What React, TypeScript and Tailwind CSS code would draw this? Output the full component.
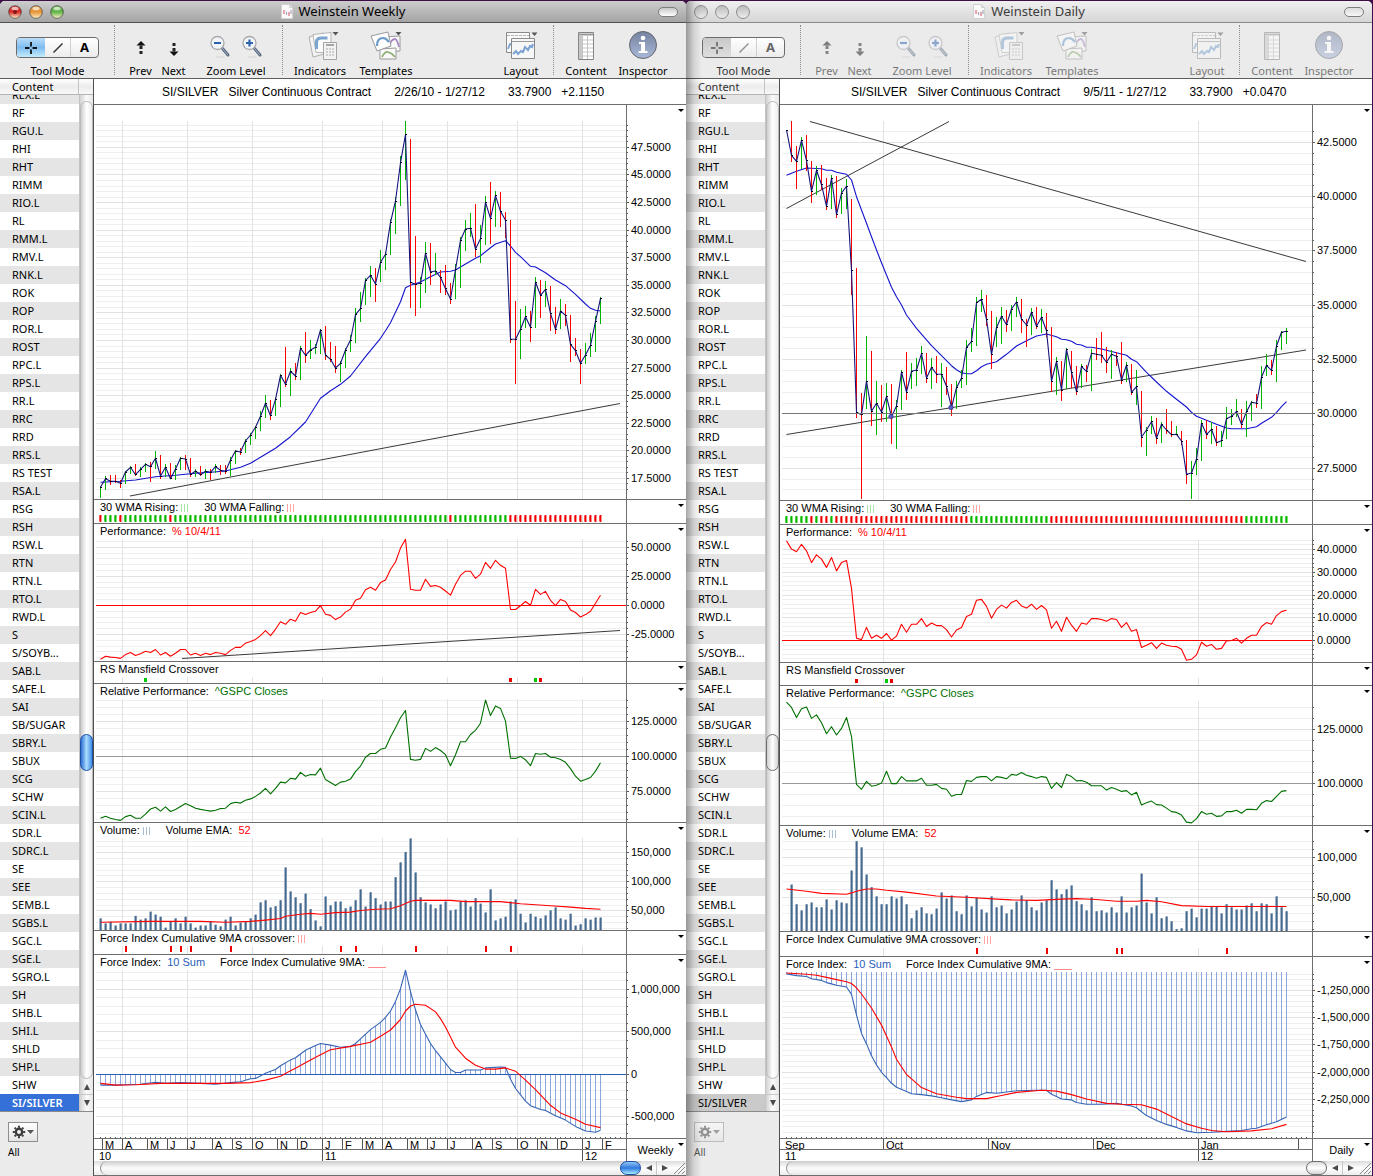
import React from "react";

type Axis = {
  base: number;
  baseY: number;
  perUnit: number;
  minor: number;
  min: number;
  max: number;
  labels: number[];
  decimals: number;
};
type Pt = [number, number];
type Line = { from: Pt; to: Pt };
type PanelSpec = {
  top: number;
  height: number;
  title: React.ReactNode;
  plotTop: number;
  axis?: Axis;
  content: React.ReactNode;
  dateTicks?: boolean;
};
type ChartSpec = {
  name: string;
  period: string;
  range: string;
  change: string;
  gap: string;
  panels: PanelSpec[];
  months: { at: number; label: string }[];
  years: { at: number; label: string }[];
  grid: number[];
  active: boolean;
};

const LEFT = 94;
const WIDTH = 532;
const barX = (i: number) => 100.5 + i * 5;
const snap = (y: number) => Math.floor(y) + 0.5;

const nums = (s: string) => s.trim().split(/\s+/).map(Number);
const pairs = (s: string): Pt[] =>
  s.trim().split(/\s+/).map((p) => p.split(":").map(Number) as Pt);
const dense = (s: string): Pt[] => nums(s).map((v, i) => [i, v] as Pt);

const path = (pts: Pt[], toY: (v: number) => number) =>
  pts.map(([i, v]) => `${barX(i)},${toY(v).toFixed(1)}`).join(" ");

function sample(pts: Pt[], i: number) {
  for (let k = 1; k < pts.length; k++) {
    const [a, va] = pts[k - 1];
    const [b, vb] = pts[k];
    if (i <= b) return va + ((vb - va) * (i - a)) / (b - a);
  }
  return pts[pts.length - 1][1];
}

/* Series rows are recorded on a finer grid than the screen. */
const priceRow = (v: number) => 100 + v / 3;
const weeklyRow = (v: number) => 490 + v / 2.376;
const dailyRow = (v: number) => 490 + v / 2.2857;

const SYMBOLS =
  "REX.L,RF,RGU.L,RHI,RHT,RIMM,RIO.L,RL,RMM.L,RMV.L,RNK.L,ROK,ROP,ROR.L,ROST,RPC.L,RPS.L,RR.L,RRC,RRD,RRS.L,RS TEST,RSA.L,RSG,RSH,RSW.L,RTN,RTN.L,RTO.L,RWD.L,S,S/SOYB...,SAB.L,SAFE.L,SAI,SB/SUGAR,SBRY.L,SBUX,SCG,SCHW,SCIN.L,SDR.L,SDRC.L,SE,SEE,SEMB.L,SGBS.L,SGC.L,SGE.L,SGRO.L,SH,SHB.L,SHI.L,SHLD,SHP.L,SHW,SI/SILVER".split(
    ","
  );

/* close,high,low,direction */
const WEEKLY_PRICE = `1161,1158,1193,g 1136,1128,1169,g 1144,1125,1155,r 1144,1125,1150,r 1150,1140,1163,r
1116,1114,1151,g 1102,1098,1121,g 1124,1091,1128,r 1108,1102,1130,g 1093,1088,1116,g 1100,1086,1145,r
1075,1053,1108,g 1128,1066,1136,r 1102,1092,1130,g 1136,1090,1138,r 1107,1096,1141,g 1075,1072,1110,g
1077,1066,1109,r 1124,1075,1131,r 1113,1107,1130,g 1124,1098,1127,r 1114,1108,1136,g 1117,1106,1140,r
1100,1093,1118,g 1111,1096,1125,r 1114,1096,1121,r 1080,1072,1128,g 1053,1050,1091,g 1056,1044,1066,r
1023,1018,1059,g 1005,1000,1035,g 982,978,1017,g 949,934,992,g 910,885,954,g 947,900,960,r 898,892,948,g
826,822,921,g 853,742,861,r 814,804,888,g 828,790,839,r 745,738,840,g 766,697,788,r 750,720,777,g
742,732,762,g 690,686,762,g 765,678,780,r 778,726,786,r 804,738,819,r 790,784,846,g 750,745,804,g
720,706,755,g 644,625,729,g 626,576,666,g 541,534,615,g 526,498,591,g 552,504,605,r 487,450,545,g
463,455,510,g 367,357,465,g 303,290,402,g 188,168,318,g 104,64,240,g 547,118,624,r 553,408,648,r
550,530,624,g 460,426,579,g 516,430,555,r 513,459,524,g 532,510,579,r 566,496,585,r 597,549,612,r
508,492,597,g 421,411,564,g 387,360,453,g 385,340,412,g 447,313,471,r 416,375,489,g 307,289,435,g
355,246,432,r 287,273,381,g 334,277,381,r 361,336,415,r 718,360,729,r 718,603,852,r 688,627,777,g
650,618,684,g 682,633,726,r 547,532,684,g 586,541,654,r 568,543,621,g 640,559,693,r 688,621,702,r
633,597,687,g 646,612,678,r 733,645,786,r 752,714,768,r 790,747,852,r 765,729,792,g 736,699,771,g
664,648,756,g 595,591,672,g`;

const DAILY_PRICE = `90,90,90,g 166,64,186,r 184,138,267,r 121,111,208,g 182,105,213,r 274,183,309,r 211,198,285,g
254,195,270,r 319,234,330,r 234,225,327,g 344,229,354,r 279,264,342,g 259,237,327,g 512,297,585,r
937,504,954,r 944,879,1197,r 843,708,927,g 934,753,978,r 910,843,1005,g 936,855,966,r 890,849,966,g
950,852,1032,r 918,900,1047,g 816,811,930,g 876,756,900,r 814,789,867,g 810,774,858,g 761,738,822,g
834,759,849,r 802,774,867,g 822,768,849,r 823,789,921,g 859,801,885,r 922,852,948,r 863,843,927,g
834,810,864,g 742,720,855,g 724,684,756,g 608,591,738,g 598,570,636,g 658,585,678,r 763,633,807,r
683,651,741,g 649,621,732,g 674,630,696,r 627,615,693,g 606,591,651,g 657,597,699,r 675,657,741,r
637,624,705,g 679,621,687,r 652,627,699,g 692,639,711,r 843,681,876,r 784,771,885,g 870,783,903,r
748,744,868,g 817,753,865,r 875,798,885,r 800,792,865,g 814,795,846,r 760,747,873,g 763,714,780,r
766,696,789,r 787,741,819,r 763,750,837,g 769,756,798,r 840,726,852,r 795,786,846,g 877,792,885,r
860,810,915,g 1011,873,1041,r 990,981,1068,g 965,948,1002,g 1015,954,1032,r 973,966,1029,g 990,927,1002,r
1004,963,1011,r 1003,978,1005,g 1023,993,1035,r 1123,1020,1152,r 1119,1083,1197,g 1077,1044,1125,g
970,960,1083,g 1003,960,1017,r 988,966,1032,g 1028,978,1038,r 1022,993,1041,g 956,921,1017,g 949,927,975,g
935,897,951,g 973,927,984,r 935,903,1011,g 907,903,963,g 910,882,924,r 832,798,927,g 796,762,828,g
811,780,825,r 738,720,846,g 697,694,750,g 694,684,732,g`;

const WEEKLY_WMA = pairs(
  "0:1147 4:1144 7:1140 11:1130 15:1126 19:1120 22:1117 25:1113 28:1102 30:1090 32:1072 35:1045 38:1010 41:966 44:895 46:872 48:853 50:828 53:770 56:715 57:692 58:668 59:637 60:605 61:563 62:556 64:546 66:530 68:516 70:514 71:510 73:492 75:475 76:467 78:443 79:432 81:422 82:438 83:457 84:470 86:499 87:501 89:518 91:540 93:557 95:583 97:612 98:625 99:631 100:633"
);
const DAILY_WMA = pairs(
  "0:226 2:214 4:204 7:206 8:211 9:211 10:217 12:223 13:240 14:290 15:330 16:370 17:410 18:450 19:488 20:525 21:562 22:590 23:615 24:645 26:685 29:737 31:767 33:797 34:809 35:818 36:821 37:821 38:812 39:800 40:793 42:785 44:763 46:738 48:722 50:708 52:702 54:710 55:718 56:719 57:724 58:733 59:735 60:742 61:742 63:747 66:758 68:766 69:778 70:785 72:817 74:846 76:874 78:898 80:921 81:937 82:949 84:961 86:973 88:984 89:986 92:986 94:980 95:970 97:952 98:937 99:920 100:905"
);

const WEEKLY_PERF = dense(
  "402 395 397 398 400 391 386 393 389 383 386 379 392 386 395 388 379 379 392 388 393 388 391 386 388 391 381 374 374 364 360 355 346 334 346 331 313 319 307 312 291 296 291 288 275 295 298 308 302 290 283 262 257 237 231 238 220 214 189 171 138 117 236 238 238 212 229 227 231 240 250 224 203 193 193 210 200 172 186 167 179 186 284 284 275 265 274 236 248 241 262 275 260 265 285 291 302 296 288 269 250"
);
const DAILY_PERF = dense(
  "116 135 141 124 139 166 148 158 177 154 185 166 161 225 339 342 314 339 332 339 328 343 334 307 325 307 307 294 312 304 310 310 319 336 320 314 289 284 252 250 266 293 273 263 270 257 252 265 270 261 273 264 274 316 300 323 291 309 323 304 307 294 294 296 300 294 296 314 303 323 319 360 355 349 362 350 355 357 358 364 389 387 377 348 357 353 364 362 345 344 339 350 339 332 332 312 303 307 287 278 275"
);
const WEEKLY_REL = dense(
  "780 775 780 783 785 776 773 780 780 770 758 754 763 753 764 759 752 745 750 756 759 761 763 761 757 756 745 742 744 737 734 728 720 709 722 709 694 696 685 687 671 680 676 677 661 688 695 702 694 692 687 669 656 635 626 626 616 613 587 565 541 524 640 642 640 614 621 612 619 629 655 629 598 598 581 571 554 499 536 513 519 549 637 638 633 641 655 626 628 626 635 636 640 647 662 680 692 688 683 668 648"
);
const DAILY_REL = dense(
  "485 497 520 500 496 522 514 532 557 541 560 545 520 563 673 684 666 677 675 670 643 671 671 655 665 665 665 659 675 675 673 682 684 700 696 696 664 666 657 655 655 665 655 657 660 650 652 646 652 655 659 655 657 682 669 680 650 655 665 664 668 676 676 676 686 680 684 689 687 697 691 720 715 711 719 720 727 735 737 743 759 761 751 735 741 739 746 745 735 735 732 739 730 730 731 716 710 712 700 689 687"
);
const WEEKLY_VOL = nums(
  "1018 1030 1026 1035 1030 1030 1030 1012 1021 1018 1002 1009 1014 1040 1025 1018 1030 1014 1030 1040 1035 1035 1025 1033 1037 1021 1014 1035 1028 1026 1018 1009 980 975 992 989 975 897 954 968 982 959 996 1023 1037 966 987 978 978 994 990 975 949 990 956 970 985 978 978 920 885 860 828 909 968 980 985 994 985 978 999 997 978 975 990 970 983 1004 949 1023 1018 1014 978 973 1007 1028 1007 1014 1018 1011 999 992 1018 1021 1007 1035 1032 1018 1021 1016 1016"
);
const DAILY_VOL = nums(
  "1008 902 947 961 947 943 954 954 936 959 938 943 945 870 803 817 879 908 929 947 947 929 934 929 947 979 961 954 968 970 957 920 934 927 963 970 927 952 932 959 966 929 954 950 968 959 941 927 938 954 961 943 938 892 913 924 913 904 940 947 961 931 963 961 966 954 966 929 966 954 950 877 943 968 931 979 975 986 1004 1002 963 957 977 957 957 952 952 968 947 954 959 959 950 945 963 945 947 968 929 954 963"
);
const WEEKLY_EMA = pairs(
  "0:1027 10:1025 20:1025 25:1027 30:1025 33:1022 36:1018 37:1013 40:1008 42:1006 44:1008 47:1004 50:1003 52:999 55:996 58:995 60:988 62:977 63:975 70:975 73:978 80:978 84:983 90:988 94:991 97:994 100:996"
);
const DAILY_EMA = pairs(
  "0:912 4:917 7:922 12:924 13:921 14:917 16:912 18:912 20:915 24:919 30:928 36:931 42:935 45:937 50:938 55:935 58:934 62:936 66:940 70:940 72:938 75:941 79:950 84:952 92:952 100:952"
);
const WEEKLY_FORCE = pairs(
  "0:1414 3:1414 5:1413 8:1412 11:1407 13:1410 16:1408 20:1410 23:1412 26:1408 28:1406 30:1399 31:1398 33:1386 34:1381 35:1377 36:1368 38:1354 39:1349 41:1331 43:1320 44:1315 46:1319 48:1324 50:1322 51:1315 52:1304 54:1282 56:1265 57:1253 58:1238 59:1215 60:1185 61:1141 62:1192 63:1235 64:1270 65:1293 66:1315 67:1332 69:1362 70:1377 71:1384 72:1384 73:1378 76:1378 77:1373 80:1371 81:1372 82:1400 83:1422 85:1452 86:1463 88:1472 89:1474 91:1487 93:1497 95:1512 97:1523 99:1526 100:1521"
);
const WEEKLY_SIGNAL = pairs(
  "0:1410 3:1414 7:1413 12:1410 25:1410 30:1408 33:1402 36:1393 38:1380 39:1374 42:1354 44:1342 46:1330 50:1322 54:1312 56:1298 58:1283 60:1258 61:1238 62:1226 63:1222 65:1224 67:1240 68:1256 69:1276 70:1300 71:1324 73:1350 75:1367 77:1376 79:1376 81:1373 83:1381 85:1402 87:1425 90:1462 92:1480 95:1495 97:1507 100:1515"
);
const DAILY_FORCE = pairs(
  "0:1106 2:1110 4:1112 5:1117 7:1121 8:1126 9:1129 10:1132 12:1136 13:1153 14:1200 15:1242 16:1266 17:1293 18:1314 19:1331 20:1343 21:1356 22:1365 24:1375 25:1380 27:1382 29:1385 31:1389 33:1394 35:1398 37:1394 38:1386 40:1377 42:1379 46:1373 50:1372 52:1372 53:1381 54:1386 55:1392 57:1394 58:1400 60:1404 63:1404 66:1402 69:1408 70:1412 71:1421 72:1430 74:1441 76:1450 78:1457 80:1465 82:1469 85:1468 88:1466 91:1464 93:1460 94:1459 96:1451 98:1444 100:1433"
);
const DAILY_SIGNAL = pairs(
  "0:1104 4:1107 6:1109 8:1114 10:1119 12:1124 13:1128 14:1138 15:1152 17:1184 19:1223 21:1273 22:1301 24:1336 25:1346 27:1366 30:1380 34:1388 36:1391 40:1391 43:1384 46:1377 51:1372 54:1374 57:1382 60:1392 64:1402 67:1404 71:1405 74:1415 77:1432 80:1449 83:1459 85:1464 88:1467 93:1465 97:1460 100:1450"
);

const GREEN = "#00b400";
const RED = "#ff0000";

function Curve({ pts, toY, color }: { pts: Pt[]; toY: (v: number) => number; color: string }) {
  return <polyline points={path(pts, toY)} fill="none" stroke={color} strokeWidth={1.1} strokeLinejoin="round" />;
}

function Rule({ y, color }: { y: number; color: string }) {
  return <path d={`M96 ${snap(y)}H626`} stroke={color} shapeRendering="crispEdges" />;
}

function Trend({ from, to }: Line) {
  return <path d={`M${from[0]} ${from[1]}L${to[0]} ${to[1]}`} stroke="#3a3a3a" strokeWidth={1} />;
}

function PriceSeries({ data, wma, trends }: { data: string; wma: Pt[]; trends: Line[] }) {
  const bars = data.split(/\s+/).map((b) => {
    const [c, h, l, d] = b.split(",");
    return { c: +c, h: +h, l: +l, up: d === "g" };
  });
  return (
    <>
      {trends.map((t, i) => (
        <Trend key={i} {...t} />
      ))}
      <Curve pts={wma} toY={priceRow} color="#1414cc" />
      {bars.map((b, i) => (
        <path
          key={i}
          d={`M${barX(i)} ${priceRow(b.h)}V${priceRow(b.l)}`}
          stroke={b.up ? GREEN : RED}
          shapeRendering="crispEdges"
        />
      ))}
      <polyline
        points={path(bars.map((b, i) => [i, b.c] as Pt), priceRow)}
        fill="none"
        stroke="#14147a"
        strokeWidth={1.1}
        strokeLinejoin="round"
      />
      {bars.map((b, i) => (
        <path key={i} d={`M${barX(i) - 0.5} ${snap(priceRow(b.c))}h2`} stroke="#000022" shapeRendering="crispEdges" />
      ))}
    </>
  );
}

function Strip({ y, isRed }: { y: number; isRed: (i: number) => boolean }) {
  return (
    <g>
      {Array.from({ length: 101 }, (_, i) => (
        <g key={i}>
          <rect x={barX(i) - 1.5} y={y} width={3} height={7} fill={isRed(i) ? "#ff9090" : "#84e070"} />
          <rect x={barX(i) - 0.5} y={y} width={1} height={7} fill={isRed(i) ? "#f00000" : "#00b800"} />
          <rect x={barX(i) - 1.5} y={y + 1} width={1} height={5} fill={isRed(i) ? "#ff4a4a" : "#4ccc3c"} />
        </g>
      ))}
    </g>
  );
}

function Marks({ at, y, h, color }: { at: number[]; y: number; h: number; color: string }) {
  return (
    <g shapeRendering="crispEdges">
      {at.map((i) => (
        <rect key={i} x={barX(i) - (h > 5 ? 0.5 : 1.5)} y={y} width={h > 5 ? 2 : 3} height={h} fill={color} />
      ))}
    </g>
  );
}

function Volume({ tops, toY, base }: { tops: number[]; toY: (v: number) => number; base: number }) {
  return (
    <g>
      {tops.map((t, i) => (
        <g key={i}>
          <rect x={barX(i) - 1.5} y={toY(t)} width={3} height={Math.max(0, base - toY(t))} fill="#a3b4c6" />
          <rect x={barX(i) - 0.5} y={toY(t)} width={1} height={Math.max(0, base - toY(t))} fill="#456a90" />
          <rect x={barX(i) + 0.5} y={toY(t)} width={1} height={Math.max(0, base - toY(t))} fill="#7b95b0" />
        </g>
      ))}
    </g>
  );
}

function Hatch({ pts, toY, from }: { pts: Pt[]; toY: (v: number) => number; from: number }) {
  return (
    <g shapeRendering="crispEdges">
      {Array.from({ length: 101 }, (_, i) => (
        <path key={i} d={`M${barX(i)} ${from}V${toY(sample(pts, i))}`} stroke="#8aa6dc" />
      ))}
    </g>
  );
}

function Key({ kind }: { kind: "green" | "red" | "blue" }) {
  const tone =
    kind === "green" ? "border-[#a5e3a5]" : kind === "red" ? "border-[#ffa5a5]" : "border-[#aabdd2]";
  return (
    <span className="ml-[3px] flex h-2 gap-[2px]">
      <i className={`border-l ${tone}`} />
      <i className={`border-l ${tone}`} />
      <i className={`border-l ${tone}`} />
    </span>
  );
}

const wmaTitle = (
  <>
    <span>30 WMA Rising:</span>
    <Key kind="green" />
    <span className="ml-4">30 WMA Falling:</span>
    <Key kind="red" />
  </>
);
const perfTitle = (
  <>
    <span>Performance:</span>
    <span className="ml-1.5 text-[#ff0000]">% 10/4/11</span>
  </>
);
const relTitle = (
  <>
    <span>Relative Performance:</span>
    <span className="ml-1.5 text-[#007000]">^GSPC Closes</span>
  </>
);
const volTitle = (
  <>
    <span>Volume:</span>
    <Key kind="blue" />
    <span className="ml-4">Volume EMA:</span>
    <span className="ml-1.5 text-[#ff0000]">52</span>
  </>
);
const crossTitle = (
  <>
    <span>Force Index Cumulative 9MA crossover:</span>
    <Key kind="red" />
  </>
);
const forceTitle = (
  <>
    <span>Force Index:</span>
    <span className="ml-1.5 text-[#2a5db8]">10 Sum</span>
    <span className="ml-[15px]">Force Index Cumulative 9MA:</span>
    <span className="ml-[3px] h-[11px] w-[18px] border-b border-[#ff8a8a]" />
  </>
);

const series = (from: number, to: number, step: number) =>
  Array.from({ length: Math.round((to - from) / step) + 1 }, (_, i) => from + i * step);

const weeklyRed = (i: number) => i === 0 || i === 4 || i === 14 || i === 70 || i >= 82;
const dailyRed = (i: number) =>
  i === 5 || i === 7 || i === 8 || (i >= 10 && i <= 36) || (i >= 53 && i <= 91);

const WEEKLY: ChartSpec = {
  name: "Weinstein Weekly",
  period: "Weekly",
  range: "2/26/10 - 1/27/12",
  change: "+2.1150",
  gap: "ml-[68px]",
  active: true,
  grid: [122, 187, 252, 322, 382, 447, 517, 582],
  months: [102, 122, 147, 167, 187, 212, 232, 252, 277, 297, 322, 342, 362, 382, 407, 427, 447, 472, 492, 517, 537, 557, 582, 602].map(
    (at, i) => ({ at, label: "MAMJJASONDJFMAMJJASONDJF"[i] })
  ),
  years: [
    { at: 94, label: "10" },
    { at: 322, label: "11" },
    { at: 582, label: "12" },
  ],
  panels: [
    {
      top: 105,
      height: 395,
      title: null,
      plotTop: 121,
      axis: { base: 47.5, baseY: 147.4, perUnit: 11.035, minor: 0.5, min: 16.5, max: 49.5, labels: series(17.5, 47.5, 2.5), decimals: 4 },
      content: (
        <PriceSeries data={WEEKLY_PRICE} wma={WEEKLY_WMA} trends={[{ from: [130, 496], to: [620, 403.5] }]} />
      ),
    },
    { top: 500, height: 24, title: wmaTitle, plotTop: 515, content: <Strip y={515} isRed={weeklyRed} /> },
    {
      top: 524,
      height: 138,
      title: perfTitle,
      plotTop: 539,
      axis: { base: 0, baseY: 605.4, perUnit: 1.163, minor: 5, min: -45, max: 55, labels: [50, 25, 0, -25], decimals: 4 },
      content: (
        <>
          <Rule y={605} color="#ff0000" />
          <Trend from={[182, 658.5]} to={[620, 630.5]} />
          <Curve pts={WEEKLY_PERF} toY={weeklyRow} color="#ff0000" />
        </>
      ),
    },
    {
      top: 662,
      height: 22,
      title: <span>RS Mansfield Crossover</span>,
      plotTop: 677,
      content: (
        <>
          <Marks at={[9, 87]} y={678} h={4} color="#00c800" />
          <Marks at={[82, 88]} y={678} h={4} color="#e60000" />
        </>
      ),
    },
    {
      top: 684,
      height: 139,
      title: relTitle,
      plotTop: 699,
      axis: { base: 100, baseY: 756.4, perUnit: 1.405, minor: 5, min: 55, max: 140, labels: [125, 100, 75], decimals: 4 },
      content: (
        <>
          <Rule y={756} color="#999999" />
          <Curve pts={WEEKLY_REL} toY={weeklyRow} color="#007000" />
        </>
      ),
    },
    {
      top: 823,
      height: 108,
      title: volTitle,
      plotTop: 838,
      axis: { base: 100000, baseY: 881.8, perUnit: 0.000581, minor: 10000, min: 20000, max: 170000, labels: [150000, 100000, 50000], decimals: 0 },
      content: (
        <>
          <Volume tops={WEEKLY_VOL} toY={weeklyRow} base={930} />
          <Curve pts={WEEKLY_EMA} toY={weeklyRow} color="#ff0000" />
        </>
      ),
    },
    {
      top: 931,
      height: 24,
      title: crossTitle,
      plotTop: 946,
      content: <Marks at={[5, 14, 16, 18, 26, 48, 51, 63, 77, 82]} y={946} h={6} color="#f00000" />,
    },
    {
      top: 955,
      height: 184,
      title: forceTitle,
      plotTop: 970,
      dateTicks: true,
      axis: { base: 0, baseY: 1074, perUnit: 0.0000846, minor: 100000, min: -700000, max: 1200000, labels: [1000000, 500000, 0, -500000], decimals: 0 },
      content: (
        <>
          <Hatch pts={WEEKLY_FORCE} toY={weeklyRow} from={1074} />
          <Rule y={1074} color="#2a5db8" />
          <Curve pts={WEEKLY_FORCE} toY={weeklyRow} color="#3564b4" />
          <Curve pts={WEEKLY_SIGNAL} toY={weeklyRow} color="#ff0000" />
        </>
      ),
    },
  ],
};

const DAILY: ChartSpec = {
  name: "Weinstein Daily",
  period: "Daily",
  range: "9/5/11 - 1/27/12",
  change: "+0.0470",
  gap: "ml-[71px]",
  active: false,
  grid: [197, 512],
  months: [
    { at: 94, label: "Sep" },
    { at: 197, label: "Oct" },
    { at: 302, label: "Nov" },
    { at: 407, label: "Dec" },
    { at: 512, label: "Jan" },
    { at: 612, label: "" },
  ],
  years: [
    { at: 94, label: "11" },
    { at: 512, label: "12" },
  ],
  panels: [
    {
      top: 105,
      height: 396,
      title: null,
      plotTop: 121,
      axis: { base: 42.5, baseY: 142.3, perUnit: 21.73, minor: 0.5, min: 26.5, max: 43, labels: series(27.5, 42.5, 2.5), decimals: 4 },
      content: (
        <>
          <PriceSeries
            data={DAILY_PRICE}
            wma={DAILY_WMA}
            trends={[
              { from: [124, 121.5], to: [620, 261.5] },
              { from: [100.5, 208.5], to: [263, 121.5] },
              { from: [100.5, 434.5], to: [620, 350] },
            ]}
          />
          <Rule y={413} color="#777777" />
          <circle cx={205} cy={416.5} r={2.3} fill="#5a5ac0" stroke="#2b2b86" strokeWidth={0.6} />
          <circle cx={265} cy={407.5} r={2.3} fill="#5a5ac0" stroke="#2b2b86" strokeWidth={0.6} />
        </>
      ),
    },
    { top: 501, height: 24, title: wmaTitle, plotTop: 516, content: <Strip y={516} isRed={dailyRed} /> },
    {
      top: 525,
      height: 138,
      title: perfTitle,
      plotTop: 540,
      axis: { base: 0, baseY: 640.5, perUnit: 2.275, minor: 2, min: -8, max: 44, labels: [40, 30, 20, 10, 0], decimals: 4 },
      content: (
        <>
          <Rule y={640} color="#ff0000" />
          <Curve pts={DAILY_PERF} toY={dailyRow} color="#ff0000" />
        </>
      ),
    },
    {
      top: 663,
      height: 23,
      title: <span>RS Mansfield Crossover</span>,
      plotTop: 678,
      content: (
        <>
          <Marks at={[20]} y={679} h={4} color="#00c800" />
          <Marks at={[14, 21]} y={679} h={4} color="#e60000" />
        </>
      ),
    },
    {
      top: 686,
      height: 140,
      title: relTitle,
      plotTop: 701,
      axis: { base: 100, baseY: 783.5, perUnit: 2.172, minor: 5, min: 85, max: 135, labels: [125, 100], decimals: 4 },
      content: (
        <>
          <Rule y={783} color="#999999" />
          <Curve pts={DAILY_REL} toY={dailyRow} color="#007000" />
        </>
      ),
    },
    {
      top: 826,
      height: 106,
      title: volTitle,
      plotTop: 841,
      axis: { base: 50000, baseY: 897.3, perUnit: 0.000797, minor: 10000, min: 10000, max: 120000, labels: [100000, 50000], decimals: 0 },
      content: (
        <>
          <Volume tops={DAILY_VOL} toY={dailyRow} base={931} />
          <Curve pts={DAILY_EMA} toY={dailyRow} color="#ff0000" />
        </>
      ),
    },
    {
      top: 932,
      height: 25,
      title: crossTitle,
      plotTop: 948,
      content: <Marks at={[38, 52, 66, 67, 88]} y={948} h={6} color="#f00000" />,
    },
    {
      top: 957,
      height: 182,
      title: forceTitle,
      plotTop: 972,
      dateTicks: true,
      axis: {
        base: -1250000,
        baseY: 990.5,
        perUnit: 0.0001089,
        minor: 50000,
        min: -2550000,
        max: -1100000,
        labels: [-1250000, -1500000, -1750000, -2000000, -2250000],
        decimals: 0,
      },
      content: (
        <>
          <Hatch pts={DAILY_FORCE} toY={dailyRow} from={972} />
          <Curve pts={DAILY_FORCE} toY={dailyRow} color="#3564b4" />
          <Curve pts={DAILY_SIGNAL} toY={dailyRow} color="#ff0000" />
        </>
      ),
    },
  ],
};

function Panel({ spec, grid }: { spec: PanelSpec; grid: number[] }) {
  const { top, height, axis, plotTop } = spec;
  const bottom = top + height - 1;
  const yOf = (v: number) => (axis ? axis.baseY - (v - axis.base) * axis.perUnit : 0);
  const minors = axis ? series(axis.min, axis.max, axis.minor) : [];
  const isMajor = (v: number) => !!axis && axis.labels.some((l) => Math.abs(l - v) < 1e-6);
  return (
    <section className="flex border-b border-[#6e6e6e]" style={{ height }}>
      <div className="relative min-w-0 flex-1">
        <svg
          className="block h-full w-full"
          viewBox={`${LEFT} ${top} ${WIDTH} ${height - 1}`}
          preserveAspectRatio="none"
          aria-hidden="true"
        >
          <g shapeRendering="crispEdges">
            {minors.map((v) => (
              <path key={v} d={`M96 ${snap(yOf(v))}H626`} stroke={isMajor(v) ? "#e2e2e2" : "#efefef"} />
            ))}
            {grid.map((x) => (
              <path key={x} d={`M${x + 0.5} ${plotTop}V${bottom}`} stroke="#e2e2e2" />
            ))}
            {spec.dateTicks &&
              Array.from({ length: 105 }, (_, i) => (
                <path key={i} d={`M${barX(i)} ${bottom - 1}v1`} stroke="#555555" />
              ))}
          </g>
          {spec.content}
        </svg>
        {spec.title && (
          <h3 className="absolute left-1.5 top-0 flex h-[15px] items-center whitespace-nowrap">{spec.title}</h3>
        )}
      </div>
      <div className="relative w-[60px] shrink-0 border-l border-[#6e6e6e]">
        <button
          aria-label="Panel menu"
          className="absolute right-[2px] top-[4px] border-x-[3px] border-t-[3px] border-x-transparent border-t-black"
        />
        {axis && (
          <svg
            className="absolute left-0 top-0 h-full w-[3px]"
            viewBox={`0 ${top} 3 ${height - 1}`}
            preserveAspectRatio="none"
            aria-hidden="true"
          >
            {minors.map((v) => (
              <path key={v} d={`M0 ${snap(yOf(v))}h${isMajor(v) ? 2 : 1}`} stroke="#555555" shapeRendering="crispEdges" />
            ))}
          </svg>
        )}
        {axis &&
          axis.labels.map((v) => (
            <span key={v} className="absolute left-1 h-3 leading-3" style={{ top: Math.floor(yOf(v)) - top - 6 }}>
              {v.toLocaleString("en-US", { minimumFractionDigits: axis.decimals, maximumFractionDigits: axis.decimals })}
            </span>
          ))}
      </div>
    </section>
  );
}

function DateRow({ cells, line }: { cells: { at: number; label: string }[]; line: boolean }) {
  const lead = cells[0].at - LEFT;
  return (
    <div className={`flex h-[11px] leading-[13px] ${line ? "border-b border-[#6e6e6e]" : ""}`}>
      {lead > 0 && <span style={{ width: `${(lead / WIDTH) * 100}%` }} />}
      {cells.map((c, i) => {
        const end = i + 1 < cells.length ? cells[i + 1].at : LEFT + WIDTH;
        return (
          <span
            key={c.at}
            className={`block whitespace-nowrap ${c.at === LEFT ? "pl-[5px]" : "border-l border-[#555555] pl-[2px]"}`}
            style={{ width: `${((end - c.at) / WIDTH) * 100}%` }}
          >
            {c.label}
          </span>
        );
      })}
    </div>
  );
}

function DocIcon() {
  return (
    <svg width="12" height="15" viewBox="0 0 12 15" aria-hidden="true">
      <path d="M.5.5h8l3 3v11H.5z" fill="#fafafa" stroke="#d2d2d2" />
      <path d="M8.500.5v3h3" fill="#ddd" stroke="#d2d2d2" />
      <path d="M3 6v4M8 8v4" stroke="#e08a96" strokeWidth="1.500" />
      <path d="M5.500 8v3M10 6v4" stroke="#a9a4bd" strokeWidth="1.200" />
    </svg>
  );
}

function Light({ color }: { color: string }) {
  const id = "light" + color.slice(1);
  return (
    <svg width="14" height="14" viewBox="0 0 14 14" aria-hidden="true">
      <defs>
        <linearGradient id={id} x1="0" y1="0" x2="0" y2="1">
          <stop offset="0" stopColor={color} stopOpacity="0.85" />
          <stop offset="0.500" stopColor={color} />
          <stop offset="1" stopColor="#fff3c8" />
        </linearGradient>
      </defs>
      <circle cx="7" cy="7" r="6.300" fill={`url(#${id})`} stroke="#000" strokeOpacity="0.45" />
      <ellipse cx="7" cy="3.500" rx="3.500" ry="1.800" fill="#fff" opacity="0.65" />
      {color === "#d82f2c" && <circle cx="7" cy="7" r="2" fill="#6a0505" opacity="0.75" />}
    </svg>
  );
}

function Magnifier({ plus }: { plus: boolean }) {
  return (
    <svg width="22" height="24" viewBox="0 0 22 24" aria-hidden="true">
      <ellipse cx="11" cy="22" rx="5" ry="1" fill="#ddd" />
      <path d="M13.500 13.500l5.500 6.500" stroke="#5b6b80" strokeWidth="3" strokeLinecap="round" />
      <path d="M13.500 13.500l5 6" stroke="#aab6c6" strokeWidth="1" strokeLinecap="round" />
      <circle cx="8.500" cy="8" r="6.500" fill="#f2f6fb" stroke="#a8a8a8" strokeWidth="1.300" />
      <path d="M5 8h7" stroke="#2f62ae" strokeWidth="2.200" />
      {plus && <path d="M8.500 4.500v7" stroke="#2f62ae" strokeWidth="2.200" />}
    </svg>
  );
}

function IndicatorsIcon() {
  return (
    <svg width="32" height="32" viewBox="0 0 32 32" aria-hidden="true">
      <path d="M2 7l14-4 5 20-15 4z" fill="#f3f3f3" stroke="#b0b0b0" />
      <path d="M6 4.500l18-2v20H9z" fill="#fbfbfb" stroke="#b5b5b5" />
      <path d="M9.500 19v-7q0-4 5-4h6" fill="none" stroke="#7aa5cf" strokeWidth="3" />
      <path d="M16.500 12.500h13v17h-13z" fill="#f2f2f2" stroke="#a5a5a5" />
      <path d="M19 15h8" stroke="#8d8d8d" strokeWidth="1.500" />
      <path d="M19 19h8M19 22h8M19 25h8" stroke="#c2c2c2" strokeWidth="1.600" strokeDasharray="2 1" />
      <path d="M25.500 2h6l-3 3.500z" fill="#555" />
    </svg>
  );
}

function TemplatesIcon() {
  return (
    <svg width="32" height="32" viewBox="0 0 32 32" aria-hidden="true">
      <path d="M12 7l18-1v15l-14 1z" fill="#fafafa" stroke="#999" />
      <path d="M19 17q2-8 6-8 2 0 4 8" fill="none" stroke="#a98ac4" strokeWidth="1.800" />
      <path d="M10 19l16-1v11H10z" fill="#fafafa" stroke="#999" />
      <path d="M12 27q3-6 6-5 4 1 7 5" fill="none" stroke="#8fae74" strokeWidth="1.800" />
      <path d="M1 6l17-4 3 14-14 5z" fill="#fdfdfd" stroke="#999" />
      <path d="M7 16q0-8 6-8 3 0 6 4" fill="none" stroke="#6d9bc9" strokeWidth="2.200" />
      <path d="M25.500 2h6l-3 3.500z" fill="#555" />
    </svg>
  );
}

function LayoutIcon() {
  return (
    <svg width="33" height="30" viewBox="0 0 33 30" aria-hidden="true">
      <path d="M1.500 1.500h23v20h-23z" fill="#fafafa" stroke="#8a8a8a" />
      <path d="M2 4.500h22" stroke="#b5b5b5" strokeDasharray="3 1" />
      <path d="M3 18l2-5 2 1" fill="none" stroke="#7ba2d2" strokeWidth="1.800" />
      <path d="M6.500 7.500h23v20h-23z" fill="#f7f7f7" stroke="#8a8a8a" />
      <path d="M7 10.500h22" stroke="#9a9a9a" />
      <path d="M8 23l3-3 2 3 3-3 2 1 2-5 3 3 2-4 2 1 1-3" fill="none" stroke="#7ba2d2" strokeWidth="2" />
      <path d="M26.500 1.500h6l-3 3.500z" fill="#555" />
    </svg>
  );
}

function ContentIcon() {
  return (
    <svg width="16" height="28" viewBox="0 0 16 28" aria-hidden="true">
      <path d="M.5.5h15v27H.5z" fill="#fff" stroke="#858585" />
      <path d="M1 2.500h14" stroke="#999" strokeWidth="2" />
      <path d="M1 4h3v23H1z" fill="#c9c9c9" />
      <path d="M4.500 4v23M9.500 4v23M1 8h14M1 12h14M1 16h14M1 20h14M1 24h14" stroke="#c4c4c4" />
    </svg>
  );
}

function InspectorIcon() {
  return (
    <svg width="30" height="30" viewBox="0 0 30 30" aria-hidden="true">
      <defs>
        <linearGradient id="info" x1="0" y1="0" x2="0" y2="1">
          <stop offset="0" stopColor="#75839f" />
          <stop offset="1" stopColor="#a9b8d8" />
        </linearGradient>
      </defs>
      <circle cx="15" cy="15" r="13.500" fill="url(#info)" stroke="#66666e" />
      <circle cx="15" cy="8" r="2.300" fill="#fff" />
      <path d="M11 12h6v9h2.500v2h-9v-2H13v-7h-2z" fill="#fff" />
    </svg>
  );
}

function StepIcon({ down }: { down: boolean }) {
  return (
    <svg width="10" height="14" viewBox="0 0 10 14" className={down ? "rotate-180" : ""} aria-hidden="true">
      <path d="M5 0l4.500 4.500h-9z" fill="#111" />
      <path d="M3.500 4.500h3v3.500h-3zM3.500 10h3v3h-3z" fill="#222" />
    </svg>
  );
}

function Tool({ label, width, dim, children }: { label: string; width: string; dim: boolean; children: React.ReactNode }) {
  return (
    <button className={`flex flex-col items-center ${width} ${dim ? "opacity-50" : ""}`}>
      <span className="flex h-[41px] items-center justify-center">{children}</span>
      <span className="whitespace-nowrap leading-[14px]">{label}</span>
    </button>
  );
}

function Divider({ className }: { className: string }) {
  return <div className={`my-0.5 w-px shrink-0 border-l border-dotted border-[#8c8c8c] ${className}`} />;
}

function Toolbar({ active }: { active: boolean }) {
  const dim = !active;
  return (
    <div className="flex h-14 items-start border-b border-[#5c5c5c] bg-[#ebebeb] pr-[14px] text-[11px] text-black">
      <div className="ml-4 flex w-[83px] flex-col items-center">
        <div className="flex h-[41px] items-center pt-2">
          <div className="flex h-[21px] w-[83px] overflow-hidden rounded-[4px] border border-[#6c6c6c] bg-gradient-to-b from-white to-[#ececec]">
            <button
              aria-label="Crosshair"
              className={`flex w-7 items-center justify-center ${active ? "bg-gradient-to-b from-[#b9dcf8] via-[#7ebcf0] to-[#c4ecfc]" : "bg-gradient-to-b from-[#c9c9c9] to-[#dedede]"}`}
            >
              <svg width="12" height="12" viewBox="0 0 12 12" className={dim ? "opacity-50" : ""} aria-hidden="true">
                <path d="M6 0v4.500M6 7.500V12M0 6h4.500M7.500 6H12" stroke="#111" strokeWidth="1.800" />
              </svg>
            </button>
            <button aria-label="Line" className="flex w-[26px] items-center justify-center border-r border-[#cfcfcf]">
              <svg width="12" height="12" viewBox="0 0 12 12" className={dim ? "opacity-50" : ""} aria-hidden="true">
                <path d="M1.500 10.500l9-9" stroke="#333" strokeWidth="1.500" />
              </svg>
            </button>
            <button aria-label="Text" className={`flex-1 text-[13px] font-bold leading-[19px] ${dim ? "text-[#666]" : ""}`}>
              A
            </button>
          </div>
        </div>
        <span className={`leading-[14px] ${dim ? "text-[#333]" : ""}`}>Tool Mode</span>
      </div>
      <Divider className="ml-[15px] h-[50px]" />
      <Tool label="Prev" width="ml-[9px] w-[33px]" dim={dim}>
        <span className="pt-2"><StepIcon down={false} /></span>
      </Tool>
      <Tool label="Next" width="w-[33px]" dim={dim}>
        <span className="pt-2.5"><StepIcon down /></span>
      </Tool>
      <div className={`ml-[14px] flex w-[64px] flex-col items-center ${dim ? "opacity-50" : ""}`}>
        <div className="flex h-[41px] items-center gap-2.5 pt-1.5">
          <button aria-label="Zoom out"><Magnifier plus={false} /></button>
          <button aria-label="Zoom in"><Magnifier plus /></button>
        </div>
        <span className="whitespace-nowrap leading-[14px]">Zoom Level</span>
      </div>
      <Divider className="ml-[14px] h-[50px]" />
      <Tool label="Indicators" width="ml-[4px] w-[66px]" dim={dim}>
        <span className="pl-1.5 pt-1"><IndicatorsIcon /></span>
      </Tool>
      <Tool label="Templates" width="w-[66px]" dim={dim}>
        <span className="pt-1"><TemplatesIcon /></span>
      </Tool>
      <div className="flex-1" />
      <Tool label="Layout" width="w-[64px]" dim={dim}>
        <span className="pt-1"><LayoutIcon /></span>
      </Tool>
      <Divider className="h-[50px]" />
      <Tool label="Content" width="ml-[4px] w-[56px]" dim={dim}>
        <span className="pt-1"><ContentIcon /></span>
      </Tool>
      <Tool label="Inspector" width="w-[58px]" dim={dim}>
        <span className="pt-0.5"><InspectorIcon /></span>
      </Tool>
    </div>
  );
}

function Arrow({ dir }: { dir: "up" | "down" | "left" | "right" }) {
  const d = { up: "M4 1l3 6H1z", down: "M4 7l3-6H1z", left: "M1 4l6-3v6z", right: "M7 4L1 1v6z" }[dir];
  return (
    <svg width="8" height="8" viewBox="0 0 8 8" aria-hidden="true">
      <path d={d} fill="#4a4a4a" />
    </svg>
  );
}

function Sidebar({ active }: { active: boolean }) {
  return (
    <aside className="flex w-[94px] shrink-0 flex-col border-r border-[#4f4f4f] bg-[#ebebeb] text-[11px]">
      <div className="flex h-4 border-b border-[#b4b4b4] bg-gradient-to-b from-white via-[#ececec] to-[#f8f8f8] leading-[16px]">
        <span className={`w-[79px] border-r border-[#c4c4c4] pl-3 ${active ? "" : "text-[#333]"}`}>Content</span>
      </div>
      <div className="flex overflow-hidden border-b border-[#8a8a8a]">
        <ul className="-mt-[9px] w-[79px] shrink-0">
          {SYMBOLS.map((s, i) => {
            const selected = i === SYMBOLS.length - 1;
            const tone = selected
              ? active
                ? "h-[17px] bg-[#3470d8] font-semibold text-white"
                : "h-[17px] bg-[#cacaca]"
              : i % 2 === 0
                ? "h-[18px] bg-[#e5e5e5]"
                : "h-[18px] bg-white";
            return (
              <li key={s} className={tone}>
                <button className="block h-full w-full whitespace-nowrap pl-3 text-left leading-[18px]">{s}</button>
              </li>
            );
          })}
        </ul>
        <div className="flex w-[14px] flex-col border-l border-[#c4c4c4] bg-gradient-to-r from-[#d2d2d2] via-[#fafafa] to-[#e8e8e8]">
          <div className="mt-1.5 flex flex-1 flex-col items-center rounded-full border border-[#b9b9b9] bg-gradient-to-r from-[#cdcdcd] via-white to-[#eeeeee]">
            <div className="flex-[631]" />
            <div
              className={`h-[37px] w-[13px] shrink-0 rounded-full border ${active ? "border-[#1b4fa8] bg-gradient-to-r from-[#2f6fd0] via-[#a9dcff] to-[#3f8ce4]" : "border-[#6e6e6e] bg-gradient-to-r from-[#cfcfcf] via-white to-[#d4d4d4]"}`}
            />
            <div className="flex-[307]" />
          </div>
          <button aria-label="Scroll up" className="flex h-4 items-center justify-center border-b border-[#c8c8c8]"><Arrow dir="up" /></button>
          <button aria-label="Scroll down" className="flex h-4 items-center justify-center"><Arrow dir="down" /></button>
        </div>
      </div>
      <div className="pl-2 pt-[10px]">
        <button
          aria-label="Actions"
          className={`flex h-5 w-[30px] items-center justify-center gap-px border border-[#8f8f8f] bg-gradient-to-b from-white to-[#e4e4e4] ${active ? "" : "opacity-50"}`}
        >
          <svg width="14" height="14" viewBox="0 0 14 14" aria-hidden="true">
            <circle cx="7" cy="7" r="3.200" fill="none" stroke="#3c3c3c" strokeWidth="2.400" />
            <path d="M7 .8v2M7 11.200v2M.8 7h2M11.200 7h2M2.600 2.600L4 4M10 10l1.400 1.400M2.600 11.400L4 10M10 4l1.400-1.400" stroke="#3c3c3c" strokeWidth="2" />
          </svg>
          <svg width="7" height="4" viewBox="0 0 7 4" aria-hidden="true"><path d="M0 0h7L3.500 4z" fill="#555" /></svg>
        </button>
        <p className={`mt-1 text-[10px] leading-[12px] ${active ? "" : "text-[#555]"}`}>All</p>
      </div>
    </aside>
  );
}

function ChartWindow({ spec }: { spec: ChartSpec }) {
  const { active } = spec;
  return (
    <article className="relative flex min-w-0 flex-1 flex-col overflow-hidden rounded-t-[5px] bg-white">
      <header
        className={`flex h-[22px] items-center border-b px-2 ${active ? "border-[#515151] bg-gradient-to-b from-[#cdcdcd] to-[#a4a4a4]" : "border-[#8a8a8a] bg-gradient-to-b from-[#f0f0f0] to-[#d6d6d6]"}`}
      >
        <div className="flex w-14 gap-[7px]">
          {active ? (
            <>
              <button aria-label="Close"><Light color="#d82f2c" /></button>
              <button aria-label="Minimize"><Light color="#e8963a" /></button>
              <button aria-label="Zoom"><Light color="#62b548" /></button>
            </>
          ) : (
            ["Close", "Minimize", "Zoom"].map((l) => (
              <button key={l} aria-label={l} className="h-[14px] w-[14px] shrink-0 rounded-full border border-[#8e8e8e] bg-gradient-to-b from-[#bcbcbc] to-[#ececec]" />
            ))
          )}
        </div>
        <h1 className={`flex flex-1 items-center justify-center gap-1.5 text-[13px] ${active ? "text-black" : "text-[#3c3c3c]"}`}>
          <DocIcon />
          {spec.name}
        </h1>
        <div className="flex w-14 justify-end">
          <button
            aria-label="Toggle toolbar"
            className={`h-[10px] w-5 rounded-full border border-[#7d7d7d] bg-gradient-to-b ${active ? "from-[#c8c8c8] to-white" : "from-[#dcdcdc] to-[#f6f6f6]"}`}
          />
        </div>
      </header>
      <Toolbar active={active} />
      <div className="flex">
        <Sidebar active={active} />
        <main className="flex min-w-0 flex-1 flex-col font-['Liberation_Sans',Arial,sans-serif] text-[11px]">
          <h2 className="flex h-[26px] items-center whitespace-nowrap border-b border-[#6e6e6e] text-[12px]">
            <span className={spec.gap}>SI/SILVER</span>
            <span className="ml-2.5">Silver Continuous Contract</span>
            <span className="ml-[23px]">{spec.range}</span>
            <span className="ml-[23px]">33.7900</span>
            <span className="ml-2.5">{spec.change}</span>
          </h2>
          {spec.panels.map((p) => (
            <Panel key={p.top} spec={p} grid={spec.grid} />
          ))}
          <div className="flex h-[22px]">
            <div className="min-w-0 flex-1">
              <DateRow cells={spec.months} line />
              <DateRow cells={spec.years} line={false} />
            </div>
            <button className="relative w-[60px] border-l border-[#6e6e6e] pr-[2px] text-center">
              {spec.period}
              <i className="absolute right-[2px] top-[4px] border-x-[3px] border-t-[3px] border-x-transparent border-t-black" />
            </button>
          </div>
          <div className="flex h-[15px] border-b border-[#6e6e6e] bg-gradient-to-b from-[#dcdcdc] via-white to-[#ececec]">
            <div className="ml-1.5 flex flex-1 justify-end rounded-l-full border-l border-[#8e8e8e] bg-gradient-to-b from-[#cdcdcd] via-[#fbfbfb] to-[#e9e9e9]">
              <div
                className={`h-[14px] w-[21px] rounded-full border ${active ? "border-[#1b4fa8] bg-gradient-to-b from-[#8fc4f4] via-[#2f78dc] to-[#a8ecff]" : "border-[#6e6e6e] bg-gradient-to-b from-[#dcdcdc] via-white to-[#d4d4d4]"}`}
              />
            </div>
            <button aria-label="Scroll left" className="flex w-4 items-center justify-center border-r border-[#c8c8c8]"><Arrow dir="left" /></button>
            <button aria-label="Scroll right" className="flex w-4 items-center justify-center"><Arrow dir="right" /></button>
            <svg width="13" height="14" viewBox="0 0 13 14" aria-hidden="true">
              <path d="M1 13L12 2M5 13l7-7M9 13l3-3" stroke="#8a8a8a" />
            </svg>
          </div>
        </main>
      </div>
      {!active && (
        <div className="pointer-events-none absolute inset-y-0 left-0 w-4 bg-gradient-to-r from-black/35 via-black/10 to-transparent" />
      )}
    </article>
  );
}

export default function App() {
  return (
    <div className="flex min-w-[1200px] bg-[#3d0f46] pr-px pt-px font-['Lucida_Grande','Noto_Sans',sans-serif]">
      <ChartWindow spec={WEEKLY} />
      <ChartWindow spec={DAILY} />
    </div>
  );
}
